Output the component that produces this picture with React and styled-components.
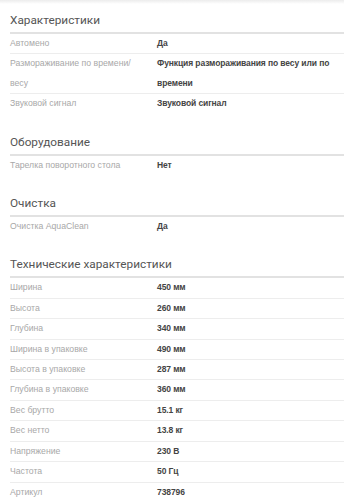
import React from "react";
import styled, { createGlobalStyle } from "styled-components";

const Global = createGlobalStyle`
  html, body { margin: 0; padding: 0; background: #fff; }
  body { font-family: "Liberation Sans", Arial, sans-serif; }
`;

const Page = styled.div`
  padding: 0 0 0 10px;
  background: linear-gradient(#ececec, #ffffff 4px);
  font-family: "Liberation Sans", Arial, sans-serif;
`;

const Section = styled.section`
  & + & { margin-top: 7px; }
`;

const Title = styled.h3`
  margin: 0;
  padding: 10px 0 2px;
  font-family: Roboto, "Liberation Sans", sans-serif;
  font-weight: 400;
  font-size: 11.8px;
  line-height: 20px;
  color: #555;
  border-bottom: 2px solid #e2e2e2;
`;

const Row = styled.div`
  display: grid;
  grid-template-columns: 147px 1fr;
  border-bottom: 1px solid #ededed;
  &:last-child { border-bottom-color: transparent; }
`;

const Label = styled.div`
  padding-right: 8px;
  font-size: 8.7px;
  line-height: 19.4px;
  color: #a8a8a8;
`;

const Value = styled.div`
  padding-right: 4px;
  font-size: 8.5px;
  letter-spacing: -0.1px;
  line-height: 19.4px;
  font-weight: 700;
  color: #444;
`;

const data = [
  {
    title: "Характеристики",
    rows: [
      ["Автомено", "Да"],
      ["Размораживание по времени/ весу", "Функция размораживания по весу или по времени"],
      ["Звуковой сигнал", "Звуковой сигнал"],
    ],
  },
  { title: "Оборудование", rows: [["Тарелка поворотного стола", "Нет"]] },
  { title: "Очистка", rows: [["Очистка AquaClean", "Да"]] },
  {
    title: "Технические характеристики",
    rows: [
      ["Ширина", "450 мм"],
      ["Высота", "260 мм"],
      ["Глубина", "340 мм"],
      ["Ширина в упаковке", "490 мм"],
      ["Высота в упаковке", "287 мм"],
      ["Глубина в упаковке", "360 мм"],
      ["Вес брутто", "15.1 кг"],
      ["Вес нетто", "13.8 кг"],
      ["Напряжение", "230 В"],
      ["Частота", "50 Гц"],
      ["Артикул", "738796"],
    ],
  },
];

export default function App() {
  return (
    <>
      <Global />
      <Page>
        {data.map((s) => (
          <Section key={s.title}>
            <Title>{s.title}</Title>
            {s.rows.map(([l, v]) => (
              <Row key={l}>
                <Label>{l}</Label>
                <Value>{v}</Value>
              </Row>
            ))}
          </Section>
        ))}
      </Page>
    </>
  );
}
